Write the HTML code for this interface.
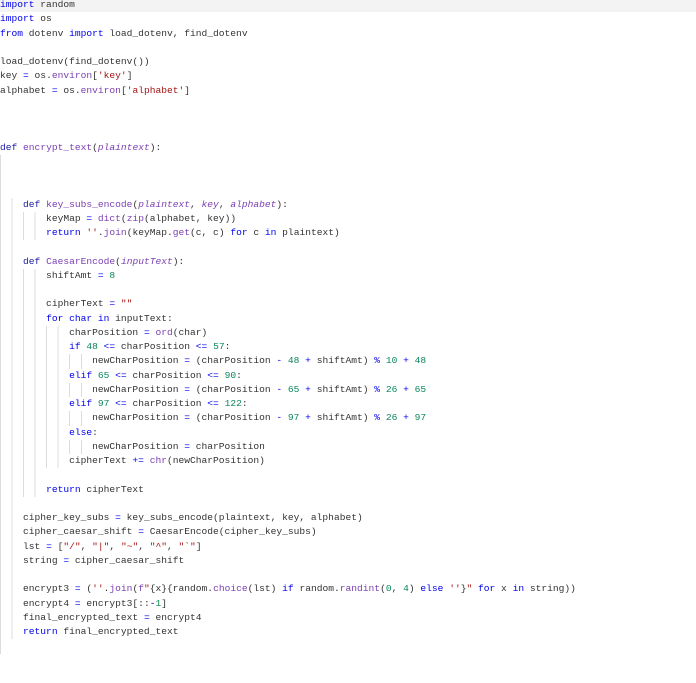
<!DOCTYPE html>
<html><head><meta charset="utf-8"><style>
html,body{margin:0;padding:0;background:#fff;width:696px;height:683px;overflow:hidden}
#c{position:absolute;left:0;top:-2px;width:696px;font-family:"Liberation Mono",monospace;font-size:9.6px;color:#333}
.l{height:14.25px;line-height:14.25px;white-space:pre;background-image:repeating-linear-gradient(90deg,#dcdcdc 0 1px,transparent 1px 11.54px);background-repeat:no-repeat;background-size:0 100%}
.hl{background-color:#f3f3f3}
.k{color:#0000ee}.d{color:#1a1aa6}.f{color:#7b3fb3}.p{color:#7b3fb3;font-style:italic}.s{color:#a31515}.n{color:#098658}.o{color:#0000ee}
</style></head><body><div id="c">
<div class="l hl"><span class="k">import</span> random</div>
<div class="l"><span class="k">import</span> os</div>
<div class="l"><span class="k">from</span> dotenv <span class="k">import</span> load_dotenv, find_dotenv</div>
<div class="l"></div>
<div class="l">load_dotenv(find_dotenv())</div>
<div class="l">key <span class="o">=</span> os.<span class="f">environ</span>[<span class="s">'key'</span>]</div>
<div class="l">alphabet <span class="o">=</span> os.<span class="f">environ</span>[<span class="s">'alphabet'</span>]</div>
<div class="l"></div>
<div class="l"></div>
<div class="l"></div>
<div class="l"><span class="d">def</span> <span class="f">encrypt_text</span>(<span class="p">plaintext</span>):</div>
<div class="l" style="background-size:2px 100%"></div>
<div class="l" style="background-size:2px 100%"></div>
<div class="l" style="background-size:2px 100%"></div>
<div class="l" style="background-size:23px 100%">    <span class="d">def</span> <span class="f">key_subs_encode</span>(<span class="p">plaintext</span>, <span class="p">key</span>, <span class="p">alphabet</span>):</div>
<div class="l" style="background-size:46px 100%">        keyMap <span class="o">=</span> <span class="f">dict</span>(<span class="f">zip</span>(alphabet, key))</div>
<div class="l" style="background-size:46px 100%">        <span class="k">return</span> <span class="s">''</span>.<span class="f">join</span>(keyMap.<span class="f">get</span>(c, c) <span class="k">for</span> c <span class="k">in</span> plaintext)</div>
<div class="l" style="background-size:23px 100%"></div>
<div class="l" style="background-size:23px 100%">    <span class="d">def</span> <span class="f">CaesarEncode</span>(<span class="p">inputText</span>):</div>
<div class="l" style="background-size:46px 100%">        shiftAmt <span class="o">=</span> <span class="n">8</span></div>
<div class="l" style="background-size:46px 100%"></div>
<div class="l" style="background-size:46px 100%">        cipherText <span class="o">=</span> <span class="s">""</span></div>
<div class="l" style="background-size:46px 100%">        <span class="k">for</span> <span class="k">char</span> <span class="k">in</span> inputText:</div>
<div class="l" style="background-size:69px 100%">            charPosition <span class="o">=</span> <span class="f">ord</span>(char)</div>
<div class="l" style="background-size:69px 100%">            <span class="k">if</span> <span class="n">48</span> <span class="o">&lt;=</span> charPosition <span class="o">&lt;=</span> <span class="n">57</span>:</div>
<div class="l" style="background-size:92px 100%">                newCharPosition <span class="o">=</span> (charPosition <span class="o">-</span> <span class="n">48</span> <span class="o">+</span> shiftAmt) <span class="o">%</span> <span class="n">10</span> <span class="o">+</span> <span class="n">48</span></div>
<div class="l" style="background-size:69px 100%">            <span class="k">elif</span> <span class="n">65</span> <span class="o">&lt;=</span> charPosition <span class="o">&lt;=</span> <span class="n">90</span>:</div>
<div class="l" style="background-size:92px 100%">                newCharPosition <span class="o">=</span> (charPosition <span class="o">-</span> <span class="n">65</span> <span class="o">+</span> shiftAmt) <span class="o">%</span> <span class="n">26</span> <span class="o">+</span> <span class="n">65</span></div>
<div class="l" style="background-size:69px 100%">            <span class="k">elif</span> <span class="n">97</span> <span class="o">&lt;=</span> charPosition <span class="o">&lt;=</span> <span class="n">122</span>:</div>
<div class="l" style="background-size:92px 100%">                newCharPosition <span class="o">=</span> (charPosition <span class="o">-</span> <span class="n">97</span> <span class="o">+</span> shiftAmt) <span class="o">%</span> <span class="n">26</span> <span class="o">+</span> <span class="n">97</span></div>
<div class="l" style="background-size:69px 100%">            <span class="k">else</span>:</div>
<div class="l" style="background-size:92px 100%">                newCharPosition <span class="o">=</span> charPosition</div>
<div class="l" style="background-size:69px 100%">            cipherText <span class="o">+=</span> <span class="f">chr</span>(newCharPosition)</div>
<div class="l" style="background-size:46px 100%"></div>
<div class="l" style="background-size:46px 100%">        <span class="k">return</span> cipherText</div>
<div class="l" style="background-size:23px 100%"></div>
<div class="l" style="background-size:23px 100%">    cipher_key_subs <span class="o">=</span> key_subs_encode(plaintext, key, alphabet)</div>
<div class="l" style="background-size:23px 100%">    cipher_caesar_shift <span class="o">=</span> CaesarEncode(cipher_key_subs)</div>
<div class="l" style="background-size:23px 100%">    lst <span class="o">=</span> [<span class="s">"/"</span>, <span class="s">"|"</span>, <span class="s">"~"</span>, <span class="s">"^"</span>, <span class="s">"`"</span>]</div>
<div class="l" style="background-size:23px 100%">    string <span class="o">=</span> cipher_caesar_shift</div>
<div class="l" style="background-size:23px 100%"></div>
<div class="l" style="background-size:23px 100%">    encrypt3 <span class="o">=</span> (<span class="s">''</span>.<span class="f">join</span>(<span class="f">f</span><span class="s">"</span>{x}{random.<span class="f">choice</span>(lst) <span class="k">if</span> random.<span class="f">randint</span>(<span class="n">0</span>, <span class="n">4</span>) <span class="k">else</span> <span class="s">''</span>}<span class="s">"</span> <span class="k">for</span> x <span class="k">in</span> string))</div>
<div class="l" style="background-size:23px 100%">    encrypt4 <span class="o">=</span> encrypt3[::<span class="o">-</span><span class="n">1</span>]</div>
<div class="l" style="background-size:23px 100%">    final_encrypted_text <span class="o">=</span> encrypt4</div>
<div class="l" style="background-size:23px 100%">    <span class="k">return</span> final_encrypted_text</div>
<div class="l" style="background-size:2px 100%"></div>
</div></body></html>
